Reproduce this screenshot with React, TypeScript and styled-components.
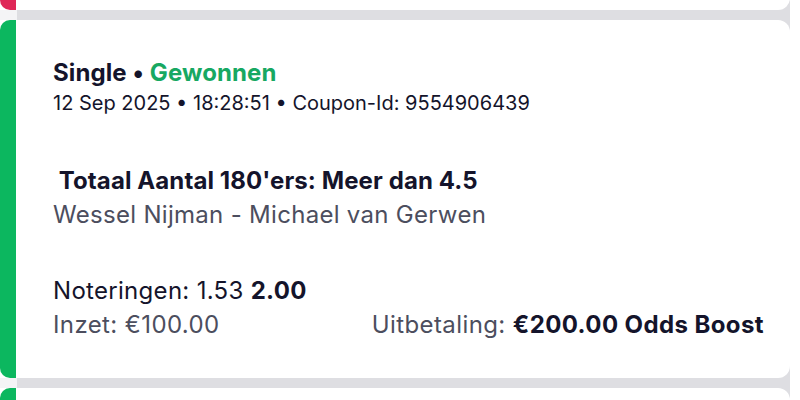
import React from "react";
import styled, { createGlobalStyle } from "styled-components";

const Global = createGlobalStyle`
  html, body { margin: 0; padding: 0; background: #ffffff; }
  body { font-family: Inter, "Noto Sans", sans-serif; -webkit-font-smoothing: antialiased; }
  #root { width: 800px; height: 400px; overflow: hidden; }
`;

const List = styled.div`
  display: flex;
  flex-direction: column;
  gap: 10px;
  margin-top: -348px;
  margin-right: 10px;
  background: linear-gradient(to right, #f4f4f6 0, #f4f4f6 17px, #dedee2 17px);
`;

const Card = styled.div<{ $accent: string }>`
  display: flex;
  height: 358px;
  background: #ffffff;
  border-radius: 0 12px 12px 0;
  &::before {
    content: "";
    flex: 0 0 16px;
    background: ${(p) => p.$accent};
    border-radius: 10px 0 0 10px;
  }
`;

const Body = styled.div`
  flex: 1;
  display: flex;
  flex-direction: column;
  padding: 37px 26px 0 37px;
  color: #14142b;
`;

const Title = styled.div`
  font-size: 24px;
  font-weight: 700;
  line-height: 32px;
  letter-spacing: 0.1px;
`;

const Status = styled.span`
  color: #17a862;
`;

const Meta = styled.div`
  font-size: 20px;
  line-height: 28px;
  letter-spacing: 0;
`;

const Market = styled.div`
  margin-top: 47px;
  font-size: 24px;
  font-weight: 700;
  line-height: 34px;
  letter-spacing: 0.1px;
  white-space: pre;
`;

const Event = styled.div`
  font-size: 24px;
  line-height: 34px;
  color: #4c4e5e;
  letter-spacing: 0.3px;
`;

const Odds = styled.div`
  margin-top: 42px;
  font-size: 24px;
  line-height: 34px;
  letter-spacing: 0.3px;
`;

const Row = styled.div`
  display: flex;
  justify-content: space-between;
  font-size: 24px;
  line-height: 34px;
  letter-spacing: 0.4px;
`;

const Muted = styled.span`
  color: #4c4e5e;
`;

const Strong = styled.b`
  font-weight: 700;
  color: #14142b;
`;

export default function App() {
  return (
    <>
      <Global />
      <List>
        <Card $accent="#df2757" />
        <Card $accent="#0cb75f">
          <Body>
            <Title>
              Single • <Status>Gewonnen</Status>
            </Title>
            <Meta>12 Sep 2025 • 18:28:51 • Coupon-Id: 9554906439</Meta>
            <Market> Totaal Aantal 180'ers: Meer dan 4.5</Market>
            <Event>Wessel Nijman - Michael van Gerwen</Event>
            <Odds>
              Noteringen: 1.53 <Strong>2.00</Strong>
            </Odds>
            <Row>
              <Muted>Inzet: €100.00</Muted>
              <span>
                <Muted>Uitbetaling: </Muted>
                <Strong>€200.00 Odds Boost</Strong>
              </span>
            </Row>
          </Body>
        </Card>
        <Card $accent="#0cb75f" />
      </List>
    </>
  );
}
